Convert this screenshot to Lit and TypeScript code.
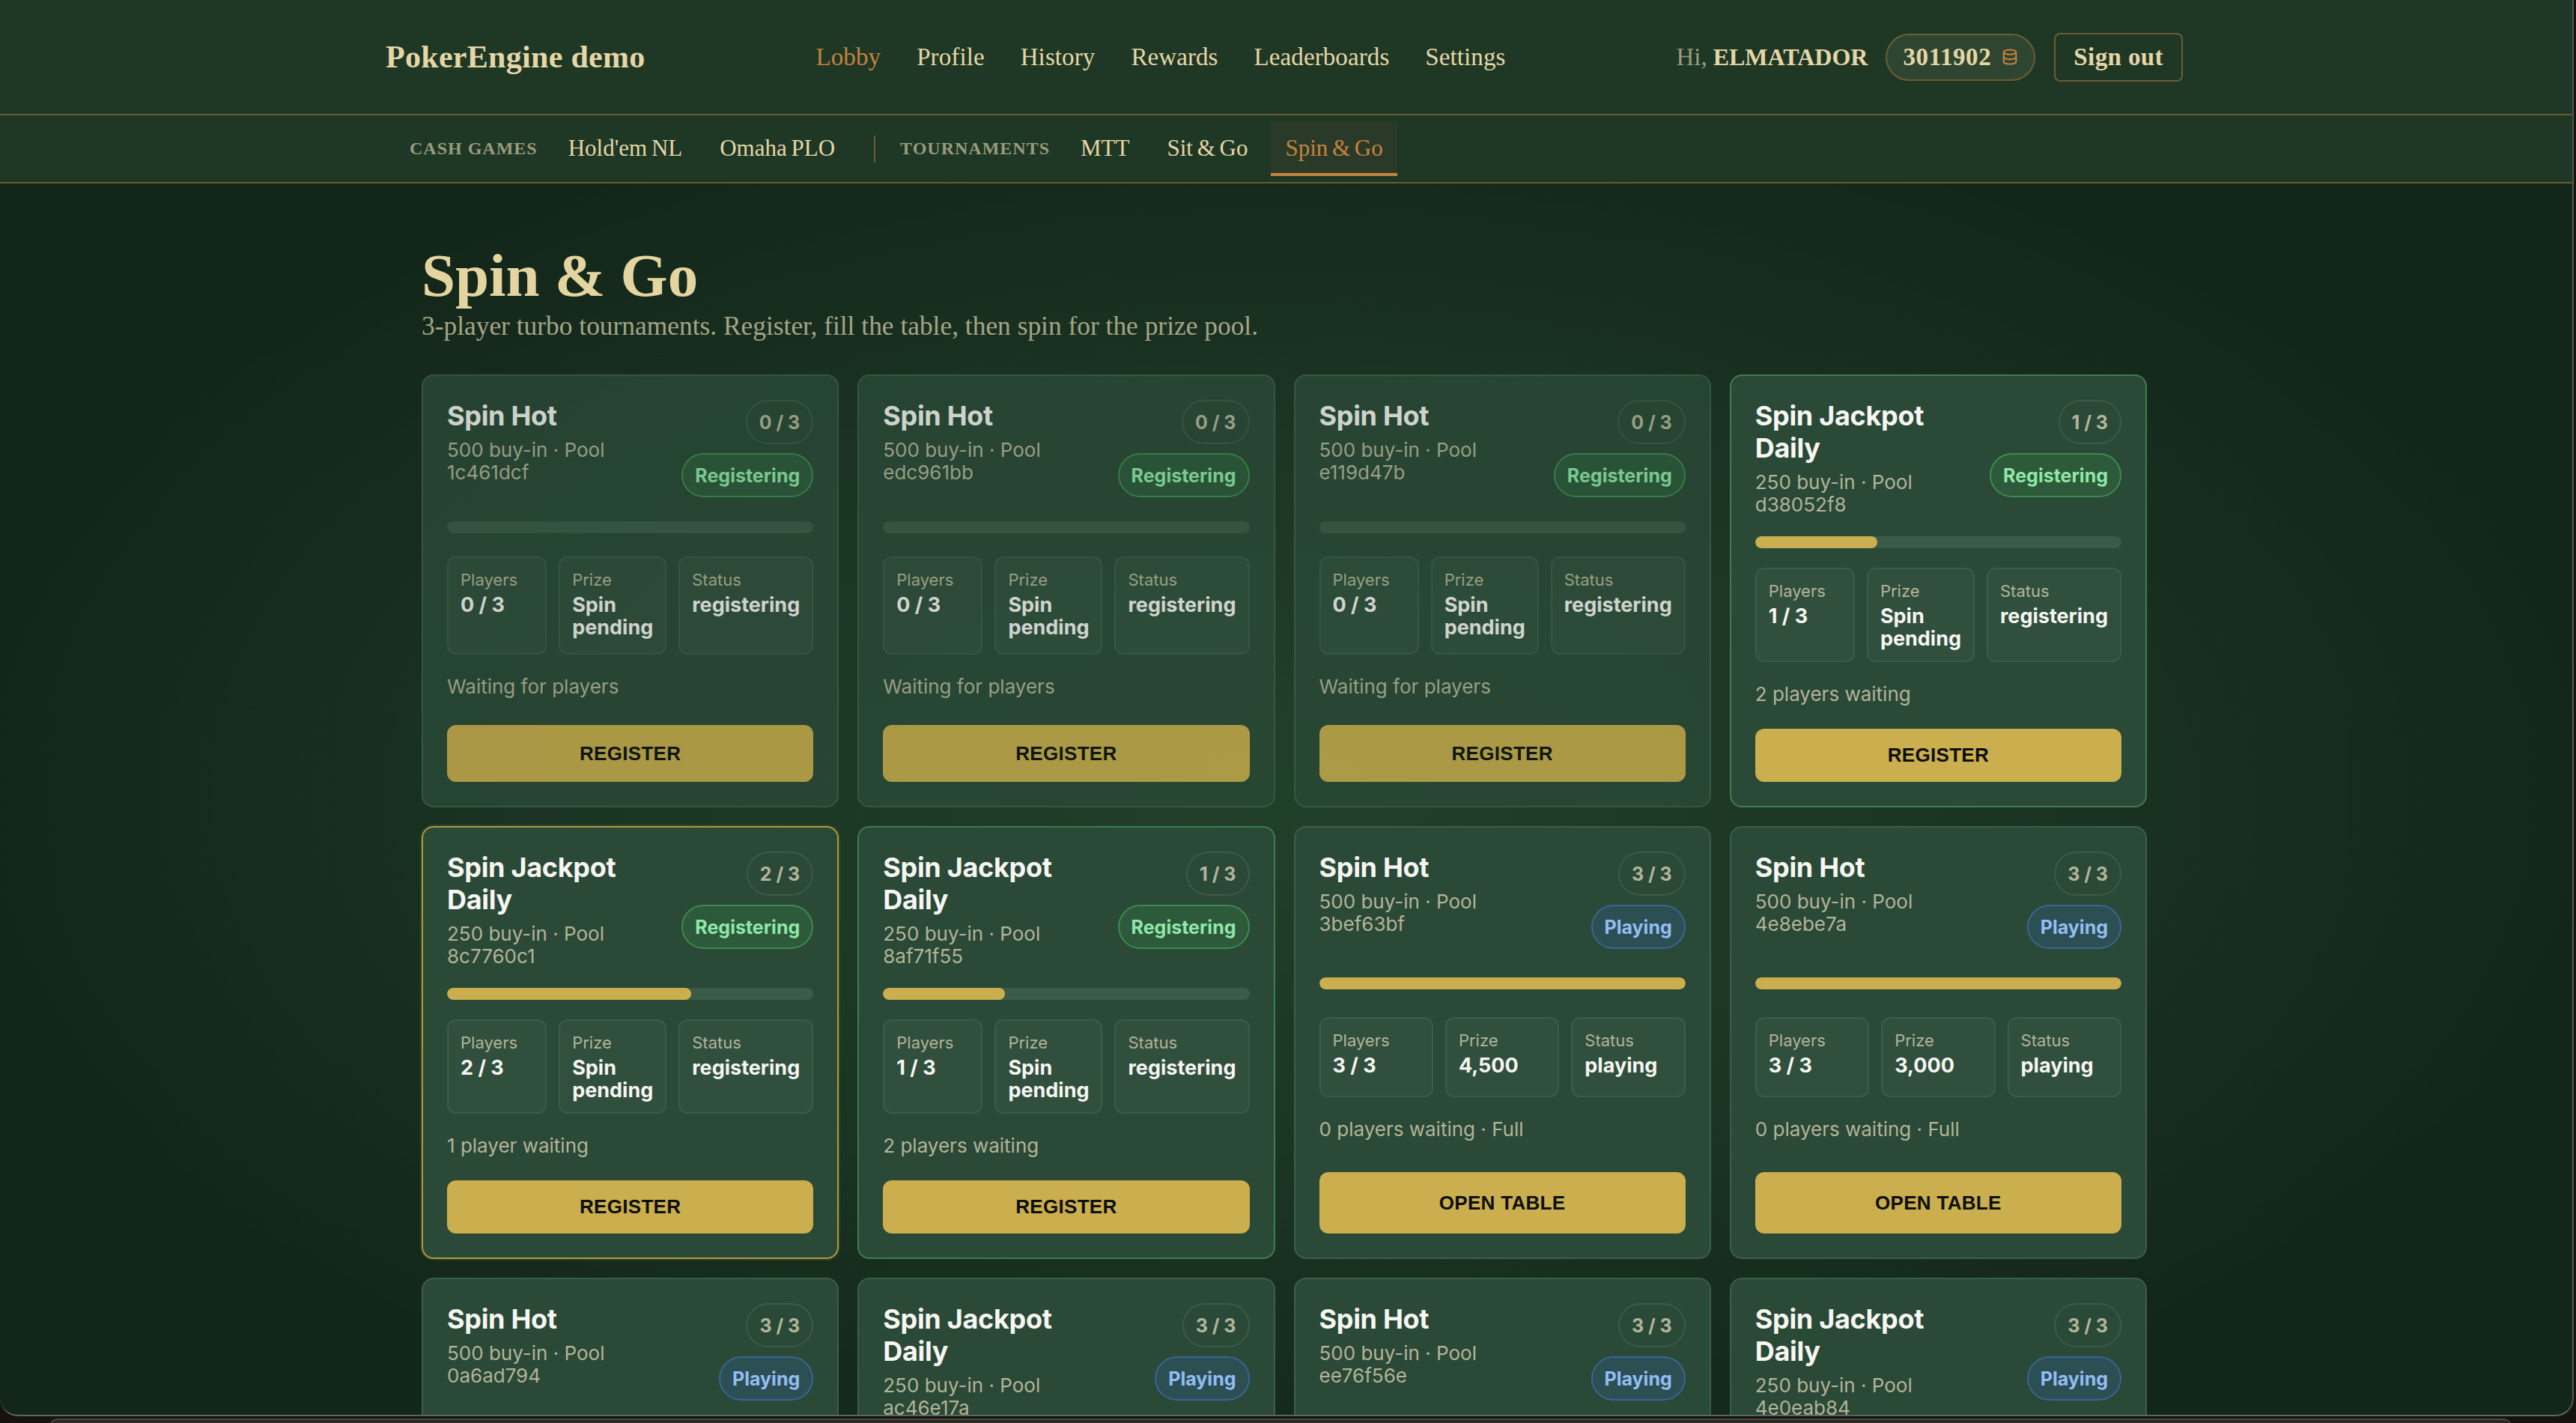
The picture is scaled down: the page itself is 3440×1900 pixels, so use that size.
import { LitElement, css, html } from "lit";
import { customElement } from "lit/decorators.js";
import { classMap } from "lit/directives/class-map.js";

type Tone = "dim" | "gold" | "green" | "";

interface Spin {
  name: string;
  buyIn: number;
  id: string;
  players: number;
  prize: string;
  status: "registering" | "playing";
  note: string;
  tone: Tone;
}

const hot = "Spin Hot";
const jackpot = "Spin Jackpot Daily";
const pending = "Spin pending";

const SPINS: Spin[] = [
  { name: hot, buyIn: 500, id: "1c461dcf", players: 0, prize: pending, status: "registering", note: "Waiting for players", tone: "dim" },
  { name: hot, buyIn: 500, id: "edc961bb", players: 0, prize: pending, status: "registering", note: "Waiting for players", tone: "dim" },
  { name: hot, buyIn: 500, id: "e119d47b", players: 0, prize: pending, status: "registering", note: "Waiting for players", tone: "dim" },
  { name: jackpot, buyIn: 250, id: "d38052f8", players: 1, prize: pending, status: "registering", note: "2 players waiting", tone: "green" },
  { name: jackpot, buyIn: 250, id: "8c7760c1", players: 2, prize: pending, status: "registering", note: "1 player waiting", tone: "gold" },
  { name: jackpot, buyIn: 250, id: "8af71f55", players: 1, prize: pending, status: "registering", note: "2 players waiting", tone: "green" },
  { name: hot, buyIn: 500, id: "3bef63bf", players: 3, prize: "4,500", status: "playing", note: "0 players waiting · Full", tone: "" },
  { name: hot, buyIn: 500, id: "4e8ebe7a", players: 3, prize: "3,000", status: "playing", note: "0 players waiting · Full", tone: "" },
  { name: hot, buyIn: 500, id: "0a6ad794", players: 3, prize: "3,000", status: "playing", note: "0 players waiting · Full", tone: "" },
  { name: jackpot, buyIn: 250, id: "ac46e17a", players: 3, prize: "1,500", status: "playing", note: "0 players waiting · Full", tone: "" },
  { name: hot, buyIn: 500, id: "ee76f56e", players: 3, prize: "3,000", status: "playing", note: "0 players waiting · Full", tone: "" },
  { name: jackpot, buyIn: 250, id: "4e0eab84", players: 3, prize: "1,500", status: "playing", note: "0 players waiting · Full", tone: "" },
];

const NAV = ["Lobby", "Profile", "History", "Rewards", "Leaderboards", "Settings"];

@customElement("app-root")
export class AppRoot extends LitElement {
  static styles = css`
    :host {
      display: block;
      height: 1900px;
      overflow: hidden;
      background: #17120d;
      font-family: Inter, "Noto Sans", sans-serif;
    }

    .window {
      width: 3437px;
      height: 1891px;
      box-sizing: border-box;
      overflow: hidden;
      border-bottom: 2px solid #58695e;
      border-right: 2px solid #4b5a50;
      border-radius: 0 0 24px 24px;
      background: radial-gradient(ellipse 1750px 950px at 50% 56%, #21402a 0%, #1b3523 52%, #13261a 100%);
    }

    .top,
    .sub {
      display: flex;
      align-items: center;
      background: #1e3825;
      font-family: "Liberation Serif", serif;
      color: #e6d6a6;
      padding-right: 515px;
      padding-left: 515px;
      box-sizing: border-box;
      width: 3430px;
    }

    .band {
      background: #1e3825;
      border-bottom: 2px solid #6b5a2f;
    }

    .top {
      height: 152px;
      justify-content: space-between;
    }

    .brand {
      font-size: 42px;
      font-weight: 700;
      letter-spacing: 0.3px;
    }

    .nav {
      display: flex;
      gap: 48px;
      font-size: 33px;
      letter-spacing: 0.1px;
    }

    .nav .on {
      color: #c6823d;
    }

    .user {
      display: flex;
      align-items: center;
      font-size: 33px;
    }

    .hi {
      color: #9a9b7c;
      margin-right: 8px;
    }

    .who {
      font-size: 32px;
      font-weight: 700;
    }

    .chips {
      display: flex;
      align-items: center;
      gap: 14px;
      height: 63px;
      box-sizing: border-box;
      margin-left: 24px;
      padding: 0 21px;
      border: 2px solid #6e5c32;
      border-radius: 32px;
      background: #2e4631;
      font-weight: 700;
      letter-spacing: 0.6px;
    }

    .chips svg {
      width: 22px;
      height: 22px;
      color: #c6823d;
    }

    .out {
      display: flex;
      align-items: center;
      height: 65px;
      box-sizing: border-box;
      margin-left: 25px;
      padding: 0 24px;
      border: 2px solid #6e5c32;
      border-radius: 8px;
      font-weight: 700;
      letter-spacing: 0.4px;
    }

    .sub {
      height: 89px;
      padding-left: 547px;
      font-size: 31px;
    }

    .group {
      margin-right: 10px;
      font-size: 24px;
      font-weight: 700;
      letter-spacing: 1px;
      color: #9a9b7c;
    }

    .tab {
      display: flex;
      align-items: center;
      height: 73px;
      box-sizing: border-box;
      margin-left: 12px;
      padding: 2px 19px 0;
      border-bottom: 4px solid transparent;
      word-spacing: -2px;
    }

    .tab.on {
      color: #c6823d;
      background: #2a3a28;
      border-bottom-color: #c6823d;
    }

    .rule {
      width: 2px;
      height: 36px;
      margin: 0 33px;
      background: #6b5a2f;
    }

    .main {
      width: 2304px;
      margin-left: 563px;
    }

    h1 {
      margin: 0;
      padding-top: 79px;
      font: 700 81px/88px "Liberation Serif", serif;
      color: #e4d4a0;
    }

    .lead {
      margin: 0 0 44px;
      padding-top: 2px;
      font: 35.4px/42px "Liberation Serif", serif;
      color: #a5a585;
    }

    .grid {
      display: grid;
      grid-template-columns: repeat(4, 1fr);
      gap: 25px;
    }

    .card {
      display: grid;
      gap: 28px;
      padding: 32px;
      min-width: 0;
      border: 2px solid #3e5d49;
      border-radius: 16px;
      background: #2a4936;
    }

    .card.dim {
      opacity: 0.82;
    }

    .card.green {
      border-color: #3f7d4f;
    }

    .card.gold {
      border-color: #ac9a3f;
      box-shadow: 0 0 0 2px rgba(172, 154, 63, 0.14);
    }

    .head {
      display: flex;
      justify-content: space-between;
      gap: 24px;
      margin-bottom: -1px;
    }

    .info {
      max-width: 280px;
    }

    .name {
      margin: 0 0 9px;
      font-size: 36px;
      font-weight: 700;
      letter-spacing: -0.3px;
      line-height: 43px;
      color: #f6f6f3;
    }

    .meta {
      font-size: 26px;
      line-height: 30px;
      color: #b3b49a;
    }

    .tags {
      display: flex;
      flex-direction: column;
      align-items: flex-end;
      gap: 12px;
      flex: none;
    }

    .pill {
      display: flex;
      align-items: center;
      height: 59px;
      box-sizing: border-box;
      padding: 0 16px;
      border: 2px solid #3d5a48;
      border-radius: 30px;
      font-size: 25px;
      font-weight: 700;
      color: #b3b49a;
    }

    .pill.registering {
      background: #2d5a3b;
      border-color: #3f8a50;
      color: #90e8a8;
    }

    .pill.playing {
      background: #2c4f53;
      border-color: #3a6595;
      color: #93bdf5;
    }

    .track {
      align-self: start;
      height: 16px;
      margin-bottom: -2px;
      overflow: hidden;
      border-radius: 8px;
      background: #3a5b47;
    }

    .fill {
      height: 100%;
      border-radius: 8px;
      background: #cbae4d;
    }

    .stats {
      display: grid;
      grid-template-columns: repeat(3, 1fr);
      gap: 16px;
    }

    .stat {
      padding: 16px 16px 14px;
      border: 2px solid #3c5b48;
      border-radius: 12px;
      background: #304f3c;
    }

    .label {
      margin-bottom: 6px;
      font-size: 22px;
      line-height: 26px;
      color: #b3b49a;
    }

    .value {
      font-size: 27px;
      font-weight: 700;
      line-height: 30px;
      color: #f6f6f3;
    }

    .note {
      padding-bottom: 3px;
      font-size: 26px;
      line-height: 30px;
      color: #b3b49a;
    }

    button {
      padding: 20px;
      border: 0;
      border-radius: 12px;
      background: #cbae4d;
      font: 700 26px/31px "Liberation Sans", Arial, sans-serif;
      letter-spacing: 0.3px;
      color: #0d0f0a;
    }

    .back {
      height: 9px;
      margin: 3px 86px 0 66px;
      border-top: 2px solid #4a4a40;
      border-radius: 16px 16px 0 0;
      background: #2a2a22;
    }
  `;

  private renderCard(s: Spin) {
    const playing = s.status === "playing";
    return html`
      <article class=${classMap({ card: true, [s.tone || "plain"]: true })}>
        <div class="head">
          <div class="info">
            <h2 class="name">${s.name}</h2>
            <div class="meta">${s.buyIn} buy-in · Pool ${s.id}</div>
          </div>
          <div class="tags">
            <span class="pill">${s.players} / 3</span>
            <span class="pill ${s.status}">${playing ? "Playing" : "Registering"}</span>
          </div>
        </div>
        <div class="track">
          <div class="fill" style="width: ${(s.players / 3) * 100}%"></div>
        </div>
        <div class="stats">
          <div class="stat"><div class="label">Players</div><div class="value">${s.players} / 3</div></div>
          <div class="stat"><div class="label">Prize</div><div class="value">${s.prize}</div></div>
          <div class="stat"><div class="label">Status</div><div class="value">${s.status}</div></div>
        </div>
        <div class="note">${s.note}</div>
        <button>${playing ? "OPEN TABLE" : "REGISTER"}</button>
      </article>
    `;
  }

  render() {
    return html`
      <div class="window">
        <div class="band">
          <header class="top">
            <div class="brand">PokerEngine demo</div>
            <nav class="nav">
              ${NAV.map((n) => html`<span class=${n === "Lobby" ? "on" : ""}>${n}</span>`)}
            </nav>
            <div class="user">
              <span class="hi">Hi,</span>
              <span class="who">ELMATADOR</span>
              <span class="chips">
                3011902
                <svg viewBox="0 0 24 24" fill="none" stroke="currentColor" stroke-width="2.2" stroke-linecap="round" stroke-linejoin="round">
                  <ellipse cx="12" cy="5" rx="9" ry="3.4"></ellipse>
                  <path d="M3 5v14c0 1.9 4 3.4 9 3.4s9-1.5 9-3.4V5"></path>
                  <path d="M3 12c0 1.9 4 3.4 9 3.4s9-1.5 9-3.4"></path>
                </svg>
              </span>
              <span class="out">Sign out</span>
            </div>
          </header>
        </div>
        <div class="band">
          <div class="sub">
            <span class="group">CASH GAMES</span>
            <span class="tab">Hold'em NL</span>
            <span class="tab">Omaha PLO</span>
            <span class="rule"></span>
            <span class="group">TOURNAMENTS</span>
            <span class="tab">MTT</span>
            <span class="tab">Sit &amp; Go</span>
            <span class="tab on">Spin &amp; Go</span>
          </div>
        </div>
        <main class="main">
          <h1>Spin &amp; Go</h1>
          <p class="lead">3-player turbo tournaments. Register, fill the table, then spin for the prize pool.</p>
          <section class="grid">${SPINS.map((s) => this.renderCard(s))}</section>
        </main>
      </div>
      <div class="back"></div>
    `;
  }
}
